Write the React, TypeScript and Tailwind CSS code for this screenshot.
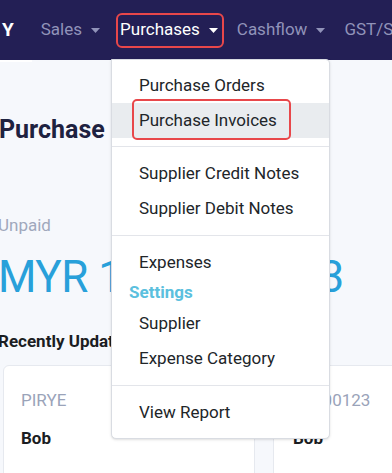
import React from 'react';

const Caret = ({ color }: { color: string }) => (
  <svg width="9" height="5" viewBox="0 0 9 5" className="ml-[9px]">
    <path d="M0 0h9L4.5 5z" fill={color} />
  </svg>
);

// Menu rows, top to bottom
const MenuItem = ({ label, active }: { label: string; active?: boolean }) => (
  <div
    className={`relative h-[35px] flex items-center pl-[27px] text-[17px] text-[#212529] ${
      active ? 'bg-[#e9ecef]' : ''
    }`}
  >
    {label}
    {active && (
      <span className="absolute left-[20px] top-[-4px] w-[159px] h-[41px] border-2 border-[#e8474a] rounded-[5px]"></span>
    )}
  </div>
);

export default function App() {
  return (
    <div className="relative w-[392px] h-[473px] overflow-hidden bg-[#f6f8fc] font-['Roboto',sans-serif]">
      {/* Top Navigation */}
      <nav className="h-[60px] bg-[#231f55] flex items-center text-[17px]">
        <span className="ml-[2px] font-bold text-white text-[19px]">Y</span>
        <div className="ml-[27px] flex items-center text-[#9193b9]">
          Sales
          <Caret color="#9193b9" />
        </div>
        <div className="ml-[16px] h-[35px] flex items-center pl-[2px] pr-[4px] border-2 border-[#e8474a] rounded-[6px] text-white">
          Purchases
          <Caret color="#ffffff" />
        </div>
        <div className="ml-[13px] flex items-center text-[#9193b9]">
          Cashflow
          <Caret color="#9193b9" />
        </div>
        <div className="ml-[19px] text-[#9193b9] whitespace-nowrap">GST/SST</div>
      </nav>

      <div className="h-[2px] w-[32px] bg-white"></div>

      {/* Page body */}
      <main className="-ml-[2px]">
        <h1 className="mt-[52px] ml-[1px] text-[25px] font-bold text-[#1e2240] leading-[32px]">Purchase</h1>

        <p className="mt-[67px] text-[17px] text-[#a0a8bc] leading-[24px]">Unpaid</p>
        <p className="mt-[14px] text-[44px] text-[#28a0da] leading-[52px] tracking-[-0.5px] whitespace-nowrap">MYR 1,245,678.23</p>

        <h2 className="mt-[26px] text-[17px] font-bold text-[#1b1d22] leading-[24px] whitespace-nowrap">Recently Updated</h2>

        <div className="mt-[12px] ml-[5px] flex gap-[18px]">
          <div className="w-[252px] shrink-0 h-[140px] bg-white border border-[#e6e9ef] rounded-[6px] pt-[22px] pl-[17px]">
            <div className="text-[17px] text-[#9aa3b9] leading-[24px]">PIRYE</div>
            <div className="mt-[14px] text-[17px] font-bold text-[#1b1d22] leading-[24px]">Bob</div>
          </div>
          <div className="w-[252px] shrink-0 h-[140px] bg-white border border-[#e6e9ef] rounded-[6px] pt-[22px] pl-[19px]">
            <div className="text-[17px] text-[#9aa3b9] leading-[24px]">PI-000123</div>
            <div className="mt-[14px] text-[17px] font-bold text-[#1b1d22] leading-[24px]">Bob</div>
          </div>
        </div>
      </main>

      {/* Purchases dropdown */}
      <div className="absolute left-[111px] top-[59px] w-[219px] bg-white border border-[#d9dce2] rounded-b-[5px] rounded-tr-[4px] py-[8px] shadow-sm">
        <MenuItem label="Purchase Orders" />
        <MenuItem label="Purchase Invoices" active />
        <div className="mt-[8px] mb-[9px] h-px bg-[#e3e5ea]"></div>
        <MenuItem label="Supplier Credit Notes" />
        <MenuItem label="Supplier Debit Notes" />
        <div className="mt-[9px] mb-[9px] h-px bg-[#e3e5ea]"></div>
        <MenuItem label="Expenses" />
        <div className="h-[26px] flex items-center pl-[17px] text-[17px] font-bold text-[#5bc0de]">Settings</div>
        <MenuItem label="Supplier" />
        <MenuItem label="Expense Category" />
        <div className="mt-[9px] mb-[9px] h-px bg-[#e3e5ea]"></div>
        <MenuItem label="View Report" />
      </div>
    </div>
  );
}
